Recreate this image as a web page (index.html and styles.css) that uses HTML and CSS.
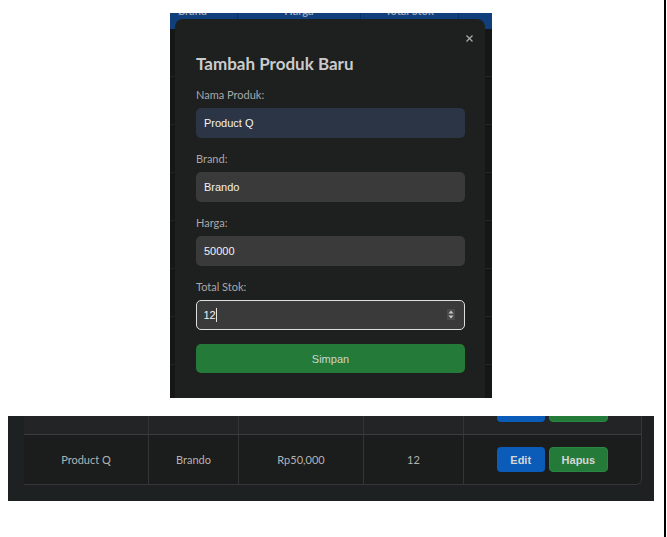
FILE: index.html
```html
<!DOCTYPE html>
<html lang="id">
<head>
<meta charset="utf-8">
<title>Tambah Produk</title>
<link rel="stylesheet" href="styles.css">
</head>
<body>
<div class="page">
  <div class="shot shot-top">
    <div class="bg-table">
      <div class="bg-row bg-head">
        <div class="bg-cell"><span>Brand</span></div>
        <div class="bg-cell"><span>Harga</span></div>
        <div class="bg-cell"><span>Total Stok</span></div>
        <div class="bg-cell"></div>
      </div>
      <div class="bg-row"><div class="bg-cell"></div><div class="bg-cell"></div><div class="bg-cell"></div><div class="bg-cell"><span class="bg-btn bg-edit"></span><span class="bg-btn bg-del"></span></div></div>
      <div class="bg-row"><div class="bg-cell"></div><div class="bg-cell"></div><div class="bg-cell"></div><div class="bg-cell"><span class="bg-btn bg-edit"></span><span class="bg-btn bg-del"></span></div></div>
      <div class="bg-row"><div class="bg-cell"></div><div class="bg-cell"></div><div class="bg-cell"></div><div class="bg-cell"><span class="bg-btn bg-edit"></span><span class="bg-btn bg-del"></span></div></div>
      <div class="bg-row"><div class="bg-cell"></div><div class="bg-cell"></div><div class="bg-cell"></div><div class="bg-cell"><span class="bg-btn bg-edit"></span><span class="bg-btn bg-del"></span></div></div>
      <div class="bg-row"><div class="bg-cell"></div><div class="bg-cell"></div><div class="bg-cell"></div><div class="bg-cell"><span class="bg-btn bg-edit"></span><span class="bg-btn bg-del"></span></div></div>
      <div class="bg-row"><div class="bg-cell"></div><div class="bg-cell"></div><div class="bg-cell"></div><div class="bg-cell"><span class="bg-btn bg-edit"></span><span class="bg-btn bg-del"></span></div></div>
      <div class="bg-row"><div class="bg-cell"></div><div class="bg-cell"></div><div class="bg-cell"></div><div class="bg-cell"><span class="bg-btn bg-edit"></span><span class="bg-btn bg-del"></span></div></div>
      <div class="bg-row"><div class="bg-cell"></div><div class="bg-cell"></div><div class="bg-cell"></div><div class="bg-cell"><span class="bg-btn bg-edit"></span><span class="bg-btn bg-del"></span></div></div>
    </div>

    <div class="modal">
      <span class="close" aria-label="Tutup">
        <svg width="7" height="7" viewBox="0 0 7 7"><path d="M0.5 0.5 L6.5 6.5 M6.5 0.5 L0.5 6.5" stroke="#a8a8a8" stroke-width="1.3" fill="none"/></svg>
      </span>
      <h2 class="title">Tambah Produk Baru</h2>
      <form class="form">
        <div class="group">
          <label class="label">Nama Produk:</label>
          <input class="field field-auto" type="text" value="Product Q" readonly>
        </div>
        <div class="group">
          <label class="label">Brand:</label>
          <input class="field" type="text" value="Brando" readonly>
        </div>
        <div class="group">
          <label class="label">Harga:</label>
          <input class="field" type="text" value="50000" readonly>
        </div>
        <div class="group">
          <label class="label">Total Stok:</label>
          <div class="field-wrap">
            <input class="field field-focus" type="text" value="12" readonly>
            <span class="caret"></span>
            <span class="spin">
              <svg width="8" height="11" viewBox="0 0 8 11"><path d="M4 1.5 L6.5 4.5 L1.5 4.5 Z M4 9.5 L6.5 6.5 L1.5 6.5 Z" fill="#c8c8c8"/></svg>
            </span>
          </div>
        </div>
        <button class="submit" type="button">Simpan</button>
      </form>
    </div>
  </div>

  <div class="shot shot-bottom">
    <div class="tbl">
      <div class="tr tr-prev">
        <div class="td">Product P</div>
        <div class="td">Brand</div>
        <div class="td">Rp30,000</div>
        <div class="td">10</div>
        <div class="td td-act"><span class="btn btn-edit">Edit</span><span class="btn btn-del">Hapus</span></div>
      </div>
      <div class="tr">
        <div class="td">Product Q</div>
        <div class="td">Brando</div>
        <div class="td">Rp50,000</div>
        <div class="td">12</div>
        <div class="td td-act"><span class="btn btn-edit">Edit</span><span class="btn btn-del">Hapus</span></div>
      </div>
    </div>
  </div>
</div>
</body>
</html>
```

FILE: styles.css
```css
* { box-sizing: border-box; margin: 0; padding: 0; }
html, body { background: #ffffff; }
body {
  width: 667px;
  height: 537px;
  overflow: hidden;
  font-family: Lato, "Open Sans", sans-serif;
}
.page {
  width: 666px;
  height: 537px;
  border-right: 2px solid #000;
  padding-top: 13px;
}

/* ---------- top screenshot ---------- */
.shot-top {
  position: relative;
  margin-left: 170px;
  width: 322px;
  height: 385px;
  overflow: hidden;
  background: #151616;
}
.bg-table { margin-left: -23px; width: 489px; }
.bg-row {
  display: grid;
  grid-template-columns: 90px 123px 98px 178px;
  height: 48px;
  border-bottom: 1px solid #232424;
}
.bg-cell {
  border-left: 1px solid #202121;
  overflow: hidden;
  display: flex;
  align-items: center;
  justify-content: center;
  gap: 4px;
}
.bg-head {
  height: 16px;
  background: #113f7b;
  border-bottom: none;
}
.bg-head .bg-cell {
  align-items: flex-start;
  border-left-color: #0c3264;
}
.bg-head span {
  margin-top: -10px;
  line-height: 16px;
  font-size: 11px;
  font-weight: 700;
  color: #9aa6b6;
}
.bg-btn { display: block; height: 22px; border-radius: 3px; }
.bg-edit { width: 47px; background: #134e96; }
.bg-del { width: 59px; background: #1a5a2b; }

.modal {
  position: absolute;
  left: 5px;
  top: 6px;
  width: 310px;
  height: 420px;
  background: #1e1f1f;
  border-radius: 8px;
  padding: 35px 20px 0 21px;
}
.close {
  position: absolute;
  top: 16px;
  right: 12px;
  width: 7px;
  height: 7px;
  display: block;
}
.close svg { display: block; }
.title {
  font-size: 17px;
  font-weight: 700;
  line-height: 20px;
  color: #cbcbcb;
  margin-bottom: 14px;
}
.group { margin-bottom: 14px; }
.label {
  display: block;
  font-size: 11px;
  line-height: 14px;
  color: #a8a8a8;
  margin-bottom: 6px;
}
.field {
  display: block;
  width: 269px;
  height: 30px;
  border: none;
  border-radius: 5px;
  background: #3a3a3a;
  color: #f2f2f2;
  font: 11px "Liberation Sans", Arial, sans-serif;
  padding: 0 8px;
  outline: none;
}
.field-auto { background: #2c3545; }
.field-focus {
  border: 1.5px solid #dedede;
  padding-left: 6.5px;
}
.field-wrap { position: relative; width: 269px; }
.caret {
  position: absolute;
  left: 20px;
  top: 8px;
  width: 1px;
  height: 14px;
  background: #e6e6e6;
}
.spin {
  position: absolute;
  right: 10px;
  top: 9px;
  width: 8px;
  height: 11px;
  background: #4a4a4a;
  display: block;
}
.spin svg { display: block; }
.submit {
  display: block;
  width: 269px;
  height: 29px;
  border: none;
  border-radius: 5px;
  background: #237a39;
  color: #cfd6cf;
  font: 11px "Liberation Sans", Arial, sans-serif;
}

/* ---------- bottom screenshot ---------- */
.shot-bottom {
  margin: 18px 0 0 8px;
  width: 646px;
  height: 85px;
  overflow: hidden;
  background: #1e2122;
  padding-left: 16px;
}
.tbl {
  width: 618px;
  margin-top: -31px;
  border-right: 1px solid #363738;
  border-bottom: 1px solid #363738;
  border-radius: 0 0 6px 0;
  overflow: hidden;
}
.tr {
  display: grid;
  grid-template-columns: 124px 90px 125px 100px 178px;
  height: 49px;
  background: #1b1c1c;
}
.tr-prev {
  height: 50px;
  background: #232425;
  border-bottom: 1px solid #3b3c3d;
}
.td {
  display: flex;
  align-items: center;
  justify-content: center;
  gap: 4px;
  font-size: 11px;
  color: #b3b3b3;
  border-left: 1px solid #333435;
}
.td:first-child { border-left: none; }
.btn {
  display: flex;
  align-items: center;
  height: 25px;
  padding: 0 13px;
  border-radius: 4px;
  font: 700 11px "Liberation Sans", Arial, sans-serif;
  color: #d6d6d6;
}
.btn-edit { background: #0b5cb8; padding: 0 13.5px; }
.btn-del { background: #237a39; border: 1px solid #2a8742; padding: 0 12px; }
```
